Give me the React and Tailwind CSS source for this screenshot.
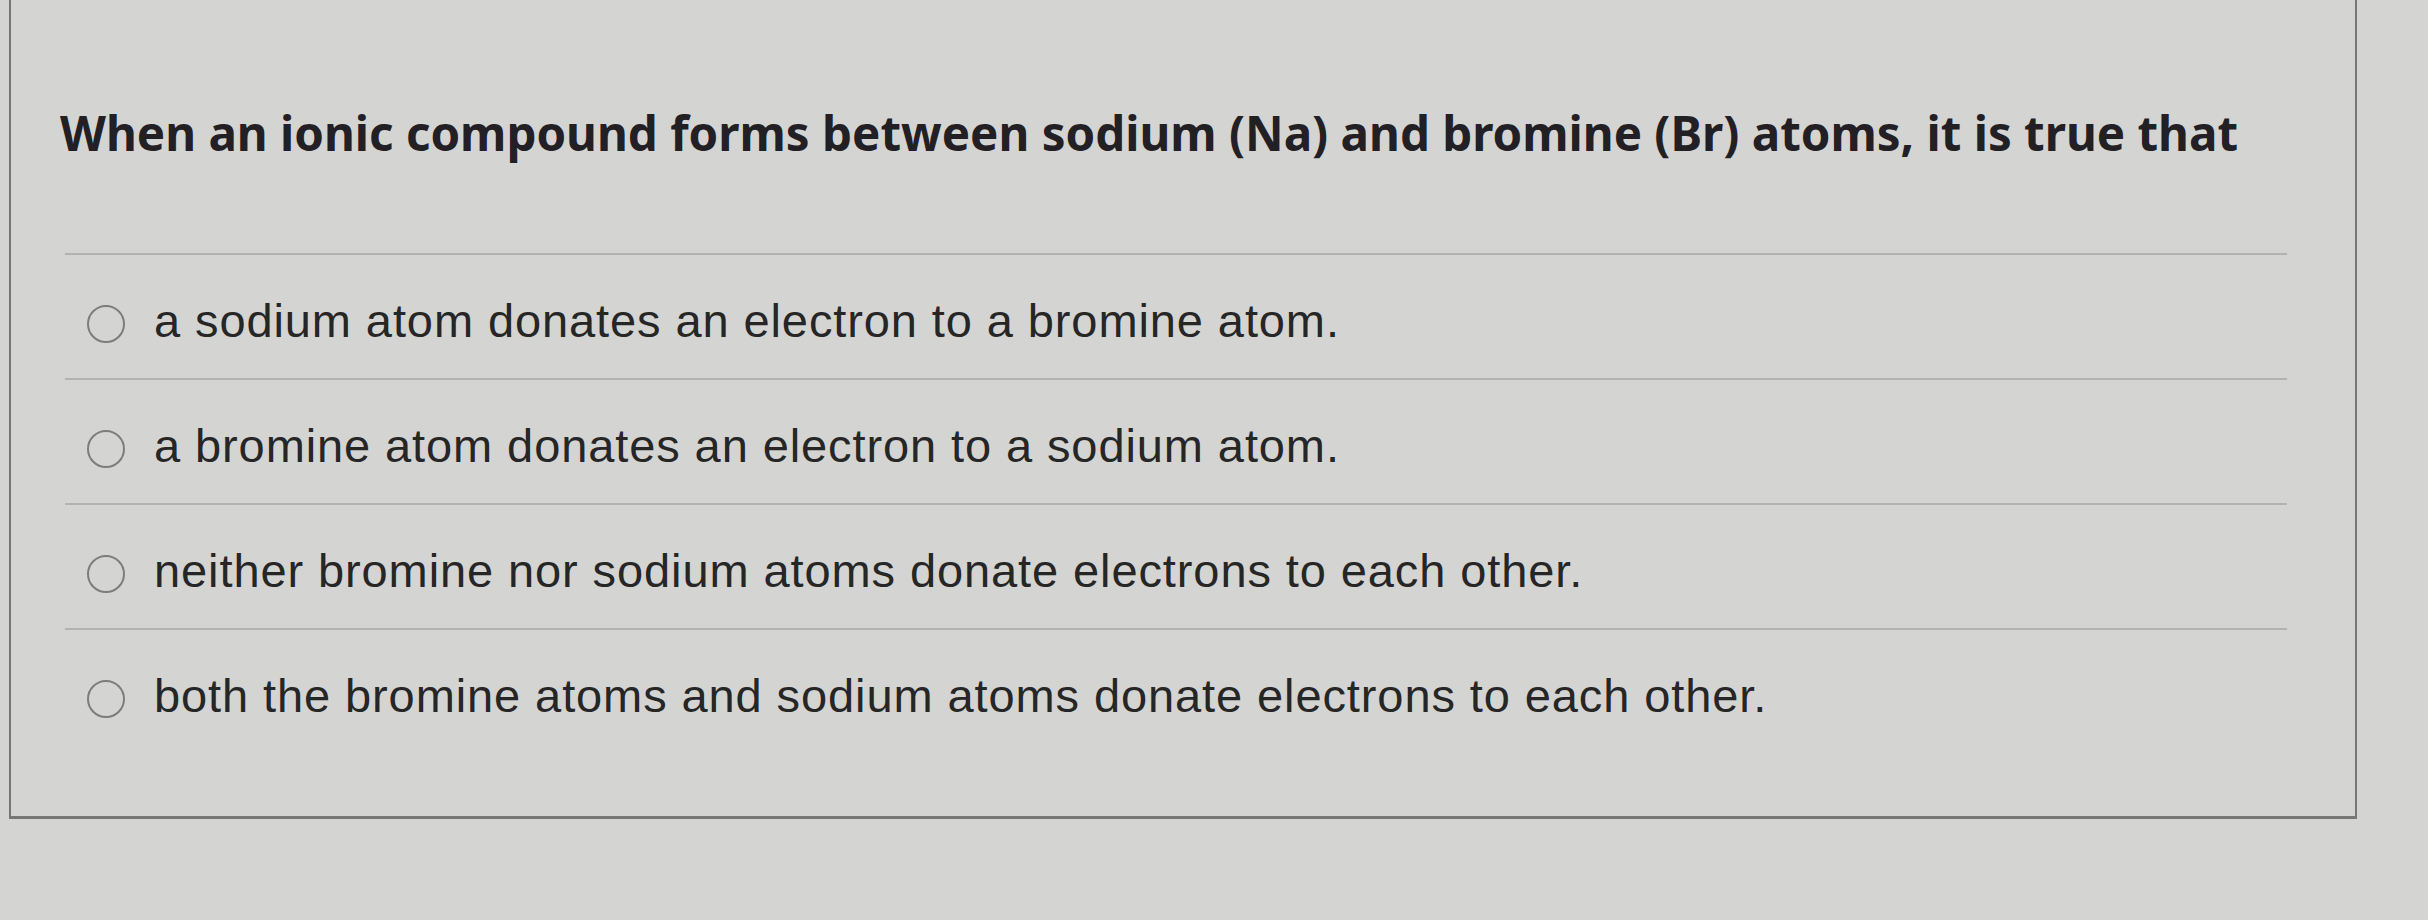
export default function App() {
  const options = [
    "a sodium atom donates an electron to a bromine atom.",
    "a bromine atom donates an electron to a sodium atom.",
    "neither bromine nor sodium atoms donate electrons to each other.",
    "both the bromine atoms and sodium atoms donate electrons to each other.",
  ];
  return (
    <div className="w-[2428px] h-[920px] overflow-hidden bg-[#d4d4d2] pl-[9px]">
      <div className="w-[2348px] h-[819px] border-l-2 border-r-2 border-b-[3px] border-[#777775] flex flex-col">
        <div
          className="h-[253px] pl-[49px] pt-[109px] text-[47.5px] leading-[48px] font-bold text-[#222024] whitespace-nowrap"
          style={{ fontFamily: '"Noto Sans", "DejaVu Sans", sans-serif' }}
        >
          When an ionic compound forms between sodium (Na) and bromine (Br) atoms, it is true that
        </div>
        <div className="ml-[54px] w-[2222px] h-[2px] bg-[#b2b2b0]" />
        {options.map((o, i) => (
          <div key={i} className="flex flex-col">
            <div className="h-[123px] pl-[76px] pt-[42px] flex items-start gap-[29px]">
              <div className="mt-[8px] w-[38px] h-[38px] rounded-full border-[2.5px] border-[#7d7d7d] shrink-0" />
              <span
                className="text-[47px] leading-[47px] tracking-[0.9px] text-[#262626] whitespace-nowrap"
                style={{ fontFamily: '"Liberation Sans", Arial, sans-serif' }}
              >
                {o}
              </span>
            </div>
            {i < 3 && <div className="ml-[54px] w-[2222px] h-[2px] bg-[#b2b2b0]" />}
          </div>
        ))}
      </div>
    </div>
  );
}
